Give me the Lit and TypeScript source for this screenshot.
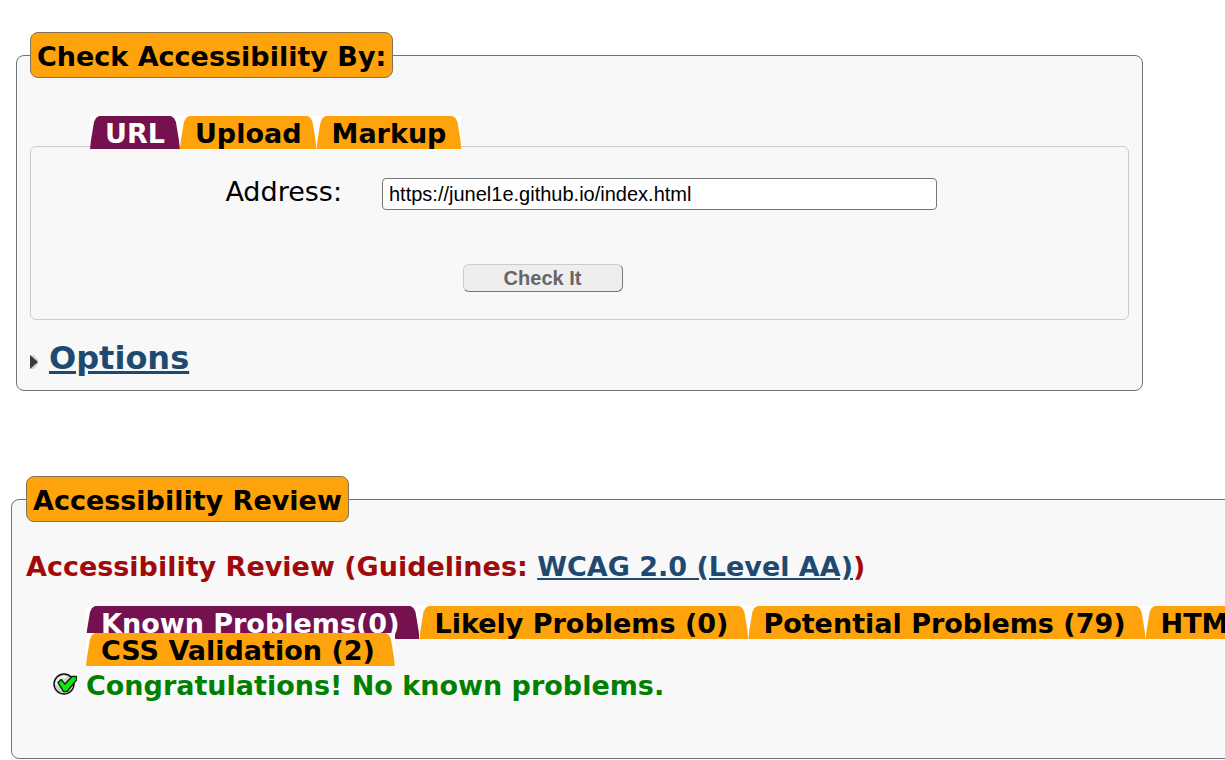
import { LitElement, html, css } from "lit";
import { customElement, property } from "lit/decorators.js";

interface Tab {
  label: string;
  active?: boolean;
}

@customElement("tab-bar")
class TabBar extends LitElement {
  @property({ attribute: false }) tabs: Tab[] = [];

  static styles = css`
    :host {
      display: block;
    }
    .tabs {
      display: flex;
      flex-wrap: wrap;
      margin: 0;
      padding: 0 0 0 60px;
      list-style: none;
    }
    /* Each wrapped row tucks under the next one. */
    .item {
      height: 33px;
      margin-bottom: -6px;
      background: #fff;
      isolation: isolate;
    }
    .tab {
      display: block;
      height: 33px;
      padding: 0 var(--tab-end, 15px) 0 15px;
      box-sizing: border-box;
      line-height: 36px;
      font-weight: bold;
      white-space: nowrap;
      text-decoration: none;
      color: #000;
      background: #ffa30d;
      clip-path: polygon(
        0 100%, 1px 24px, 4px 6px, 6px 2px, 9px 0,
        calc(100% - 9px) 0, calc(100% - 6px) 2px, calc(100% - 4px) 6px,
        calc(100% - 1px) 24px, 100% 100%
      );
    }
    .tab.active {
      color: #fff;
      background: #75114f;
    }
  `;

  render() {
    return html`<ul class="tabs">
      ${this.tabs.map(
        (t) => html`<li class="item">
          <a class="tab ${t.active ? "active" : ""}" href="#">${t.label}</a>
        </li>`
      )}
    </ul>`;
  }
}

@customElement("app-root")
class AppRoot extends LitElement {
  private inputTabs: Tab[] = [
    { label: "URL", active: true },
    { label: "Upload" },
    { label: "Markup" },
  ];
  private resultTabs: Tab[] = [
    { label: "Known Problems(0)", active: true },
    { label: "Likely Problems (0)" },
    { label: "Potential Problems (79)" },
    { label: "HTML Validation" },
    { label: "CSS Validation (2)" },
  ];

  static styles = css`
    :host {
      display: block;
      overflow: hidden;
      padding-top: 32px;
      background: #fff;
      color: #000;
      font: 27px/32px Verdana, "DejaVu Sans", sans-serif;
    }
    .group {
      box-sizing: border-box;
      min-width: 0;
      border: 1px solid #6f747c;
      border-radius: 8px;
      background: #f8f8f8;
    }
    .check {
      width: 92%;
      margin: 0 0 85px 16px;
      padding: 38px 13px 13px;
    }
    /* The results run wider than the window. */
    .review {
      width: 120%;
      margin: 0 0 0 11px;
      padding: 29px 14px 56px;
    }
    .legend {
      padding: 8px 6px 4px;
      border: 1px solid #7f7456;
      border-radius: 8px;
      background: #ffa30d;
      font-weight: bold;
    }
    .panel {
      padding: 31px 0 27px;
      border: 1px solid #ccc;
      border-radius: 6px;
    }
    .input-tabs {
      margin-bottom: 3px;
    }
    .result-tabs {
      --tab-end: 20px;
    }
    .row {
      display: flex;
      align-items: center;
      gap: 40px;
    }
    .label {
      width: 311px;
      text-align: right;
      line-height: 28px;
      padding-bottom: 4px;
    }
    .address {
      box-sizing: border-box;
      width: 555px;
      height: 32px;
      padding: 0 6px;
      border: 1px solid #767676;
      border-radius: 4px;
      background: #fff;
      color: #000;
      font: 20px "Liberation Sans", Arial, sans-serif;
    }
    .actions {
      display: flex;
      justify-content: center;
      margin-top: 54px;
      padding-right: 74px;
    }
    .submit {
      box-sizing: border-box;
      width: 160px;
      height: 28px;
      padding: 0;
      border: 1px solid;
      border-color: #ccc #777 #777 #ccc;
      border-radius: 6px;
      background: #eee;
      color: #666;
      font: bold 20px "Liberation Sans", Arial, sans-serif;
    }
    .options {
      display: flex;
      align-items: center;
      gap: 11px;
      margin: 19px 0 0;
      font-size: 32px;
      line-height: 38px;
    }
    .arrow {
      width: 8px;
      height: 14px;
      margin-top: 8px;
    }
    .link {
      color: #1f4a70;
    }
    .heading {
      margin: 0 0 23px;
      font-size: 27px;
      line-height: 32px;
      color: #a00a0a;
    }
    .message {
      display: flex;
      align-items: center;
      gap: 9px;
      margin: 10px 0 0 27px;
      font-weight: bold;
      color: #008000;
    }
    .tick {
      width: 24px;
      height: 22px;
      margin-bottom: 4px;
    }
  `;

  render() {
    return html`
      <fieldset class="group check">
        <legend class="legend">Check Accessibility By:</legend>
        <tab-bar class="input-tabs" .tabs=${this.inputTabs}></tab-bar>
        <div class="panel">
          <div class="row">
            <label class="label" for="address">Address:</label>
            <input id="address" class="address" type="text" value="https://junel1e.github.io/index.html" />
          </div>
          <div class="actions">
            <button class="submit" type="button" disabled>Check It</button>
          </div>
        </div>
        <h2 class="options">
          <svg class="arrow" viewBox="0 0 8 14" aria-hidden="true">
            <path d="M0 0h4l4 5v4l-4 5H0z" fill="#d8d6d6" />
            <path d="M0 0L8 7 0 14z" fill="#3c3a3c" />
          </svg>
          <a class="link" href="#">Options</a>
        </h2>
      </fieldset>

      <fieldset class="group review">
        <legend class="legend">Accessibility Review</legend>
        <h3 class="heading">
          Accessibility Review (Guidelines: <a class="link" href="#">WCAG 2.0 (Level AA)</a>)
        </h3>
        <tab-bar class="result-tabs" .tabs=${this.resultTabs}></tab-bar>
        <div class="message">
          <svg class="tick" viewBox="0 0 24 22" aria-hidden="true">
            <circle cx="11" cy="11" r="10" fill="#d0d0d0" stroke="#111" stroke-width="1.5" />
            <path d="M3.500 12a7.500 7.500 0 0 1 10-7.500" fill="none" stroke="#f4f4f4" stroke-width="2.500" />
            <path d="M5 9.500l3-3 4 4.500 7-7.500h4.500v3.500L14 18.500h-3.500z" fill="#10e810" stroke="#052c05" stroke-width="1.400" />
          </svg>
          <span>Congratulations! No known problems.</span>
        </div>
      </fieldset>
    `;
  }
}
